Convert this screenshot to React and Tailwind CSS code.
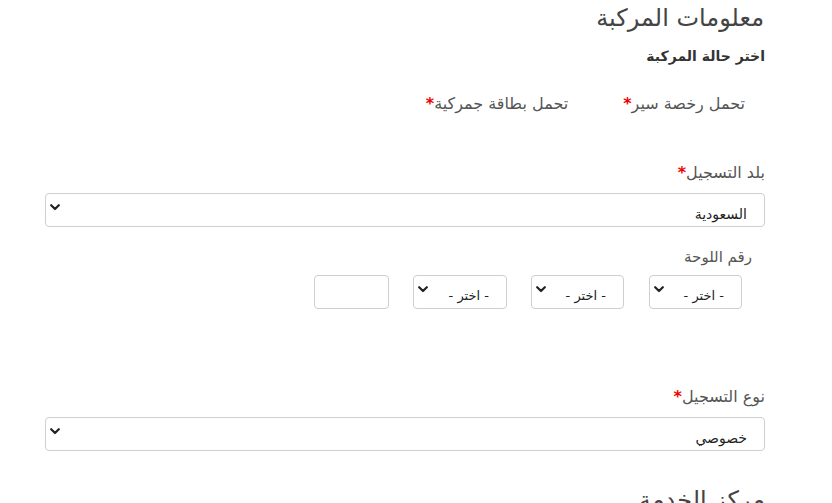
const Chevron = () => (
  <svg width="10" height="7" viewBox="0 0 10 7" className="shrink-0">
    <path d="M1.2 1.2 L5 5 L8.8 1.2" fill="none" stroke="#222" strokeWidth="2.2" strokeLinecap="round" strokeLinejoin="round" />
  </svg>
);

const Star = () => <span className="text-[#e00] font-bold">*</span>;

function FakeSelect({ value, className = '', textSize = 'text-[14px]' }) {
  return (
    <div className={`h-[34px] border border-[#cfcfcf] rounded-[4px] bg-white flex items-center justify-between ${className}`}>
      <span className={`${textSize} text-[#222] pt-[8px] leading-5 whitespace-nowrap`}>{value}</span>
      <span className="-mt-[6px]"><Chevron /></span>
    </div>
  );
}

export default function App() {
  return (
    <div
      dir="rtl"
      className="w-[832px] h-[503px] overflow-hidden bg-white pr-[67px] pl-[45px]"
      style={{ fontFamily: '"DejaVu Sans", "Noto Sans", sans-serif' }}
    >
      <h2 className="text-[24px] leading-[32px] pt-[2px] text-[#444] pr-[1px]">معلومات المركبة</h2>
      <h3 className="mt-[12px] text-[14px] leading-5 font-bold text-[#333]">اختر حالة المركبة</h3>

      <div className="mt-[26px] flex text-[16px] leading-6 text-[#555]">
        <label className="mr-[20px]">
          تحمل رخصة سير<Star />
        </label>
        <label className="mr-[55px]">
          تحمل بطاقة جمركية<Star />
        </label>
      </div>

      <div className="mt-[45px] text-[16px] leading-6 text-[#555]">
        بلد التسجيل<Star />
      </div>
      <FakeSelect value="السعودية" className="mt-2 pr-[17px] pl-[4px]" />

      <div className="mt-[18px] pr-[13px] text-[15px] leading-6 text-[#555]">رقم اللوحة</div>
      <div className="mt-[6px] pr-[23px] flex">
        <FakeSelect value="- اختر -" textSize="text-[13px]" className="w-[93px] pr-[17px] pl-[4px]" />
        <FakeSelect value="- اختر -" textSize="text-[13px]" className="w-[93px] mr-[25px] pr-[17px] pl-[4px]" />
        <FakeSelect value="- اختر -" textSize="text-[13px]" className="w-[94px] mr-[24px] pr-[17px] pl-[4px]" />
        <div className="w-[75px] h-[34px] mr-[24px] border border-[#cfcfcf] rounded-[4px] bg-white" />
      </div>

      <div className="mt-[76px] text-[16px] leading-6 text-[#555]">
        نوع التسجيل<Star />
      </div>
      <FakeSelect value="خصوصي" className="mt-2 pr-[17px] pl-[4px]" />

      <h2 className="mt-[33px] text-[24px] leading-[32px] text-[#444]">مركز الخدمة</h2>
    </div>
  );
}
